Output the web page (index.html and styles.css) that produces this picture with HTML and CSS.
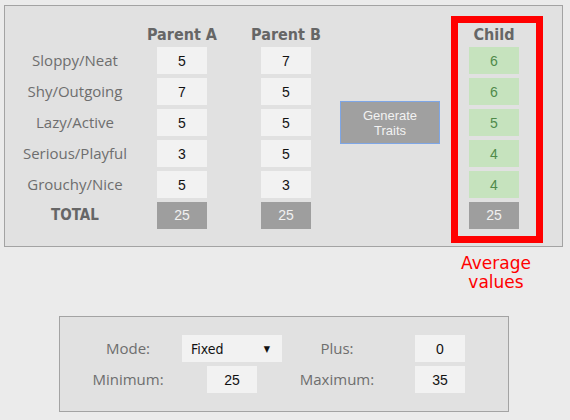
FILE: index.html
```html
<!DOCTYPE html>
<html lang="en">
<head>
  <meta charset="UTF-8" />
  <meta name="viewport" content="width=device-width, initial-scale=1.0" />
  <title>Trait Generator</title>
  <link rel="stylesheet" href="styles.css">
</head>
<body>
  <div class="page">
    <section class="panel traits">
      <div class="head col-a">Parent A</div>
      <div class="head col-b">Parent B</div>
      <div class="head col-c">Child</div>

      <button class="gen-btn">Generate<br>Traits</button>

      <div class="lbl">Sloppy/Neat</div>
      <input class="val col-a" value="5">
      <input class="val col-b" value="7">
      <input class="val col-c child" value="6" readonly>

      <div class="lbl">Shy/Outgoing</div>
      <input class="val col-a" value="7">
      <input class="val col-b" value="5">
      <input class="val col-c child" value="6" readonly>

      <div class="lbl">Lazy/Active</div>
      <input class="val col-a" value="5">
      <input class="val col-b" value="5">
      <input class="val col-c child" value="5" readonly>

      <div class="lbl">Serious/Playful</div>
      <input class="val col-a" value="3">
      <input class="val col-b" value="5">
      <input class="val col-c child" value="4" readonly>

      <div class="lbl">Grouchy/Nice</div>
      <input class="val col-a" value="5">
      <input class="val col-b" value="3">
      <input class="val col-c child" value="4" readonly>

      <div class="lbl total-lbl">TOTAL</div>
      <div class="total col-a">25</div>
      <div class="total col-b">25</div>
      <div class="total col-c">25</div>

      <div class="highlight"></div>
    </section>

    <div class="note-row">
      <p class="note">Average<br>values</p>
    </div>

    <section class="panel settings">
      <div class="s-lbl">Mode:</div>
      <div class="select">Fixed <span class="arrow">&#9660;</span></div>
      <div class="s-lbl">Plus:</div>
      <input class="val" value="0">

      <div class="s-lbl">Minimum:</div>
      <input class="val" value="25">
      <div class="s-lbl">Maximum:</div>
      <input class="val" value="35">
    </section>
  </div>
</body>
</html>
```

FILE: styles.css
```css
:root{
  --page:#ebebeb;
  --panel:#e1e1e1;
  --line:#a3a3a3;
  --field:#f2f2f2;
  --dark:#9e9e9e;
  --text:#6e6e6e;
}
*{box-sizing:border-box}
body{margin:0;background:var(--page);font-family:"Open Sans",Arial,sans-serif;color:var(--text)}
.page{padding:5px 7px 0 4px}

.panel{background:var(--panel);border:1px solid var(--line)}

/* trait table */
.traits{
  position:relative;
  display:grid;
  grid-template-columns:110px repeat(4,104px);
  grid-template-rows:17px;
  grid-auto-rows:27px;
  row-gap:4px;
  padding:20px 15px 17px 15px;
}
.head{
  font-family:"DejaVu Sans Condensed","Liberation Sans",sans-serif;
  font-weight:bold;font-size:16px;line-height:17px;
  text-align:center;color:#666;
}
.lbl{grid-column:1;text-align:center;font-size:15px;line-height:27px;white-space:nowrap}
.total-lbl{
  font-family:"DejaVu Sans Condensed","Liberation Sans",sans-serif;
  font-weight:bold;font-size:15px;color:#666;
}
.col-a{grid-column:2}
.col-b{grid-column:3}
.col-c{grid-column:5}

.val,.total{
  width:50px;height:27px;justify-self:center;
  border:none;outline:none;padding:0;
  background:var(--field);
  font-family:"Liberation Sans",Arial,sans-serif;font-size:14px;
  text-align:center;color:#111;
}
.val.child{background:#c6e3be;color:#4f8a4a}
.total{background:var(--dark);color:#f1f1f1;line-height:27px}

.gen-btn{
  -webkit-appearance:none;appearance:none;
  grid-column:4;grid-row:3 / span 3;
  align-self:center;justify-self:center;
  width:100px;height:43px;margin:0;padding:0;
  background:#a0a0a0;border:1px solid #7ea6e6;border-radius:0;
  color:#f2f2f2;font-family:"Liberation Sans",Arial,sans-serif;font-size:13px;line-height:15px;
}

.highlight{
  position:absolute;left:446px;top:10px;
  width:92px;height:227px;
  border:7px solid #ff0000;
}

.note-row{display:flex;justify-content:flex-end;padding-right:21px}
.note{
  margin:7px 0 0;width:92px;text-align:center;
  font-family:"DejaVu Sans",Verdana,sans-serif;font-size:17px;line-height:19px;
  color:#ff0000;
}

/* settings */
.settings{
  margin:24px 0 0 55px;width:450px;
  display:grid;
  grid-template-columns:108px 100px 110px 96px;
  grid-auto-rows:27px;
  row-gap:4px;
  padding:18px 20px 18px 14px;
}
.s-lbl{text-align:center;font-size:15px;line-height:27px}
.settings .val{justify-self:center}
.select{
  display:flex;justify-content:space-between;align-items:center;
  background:var(--field);padding:0 12px 0 9px;
  font-family:"DejaVu Sans Condensed","Liberation Sans",sans-serif;font-size:14px;color:#111;
}
.arrow{font-size:9px}
```
